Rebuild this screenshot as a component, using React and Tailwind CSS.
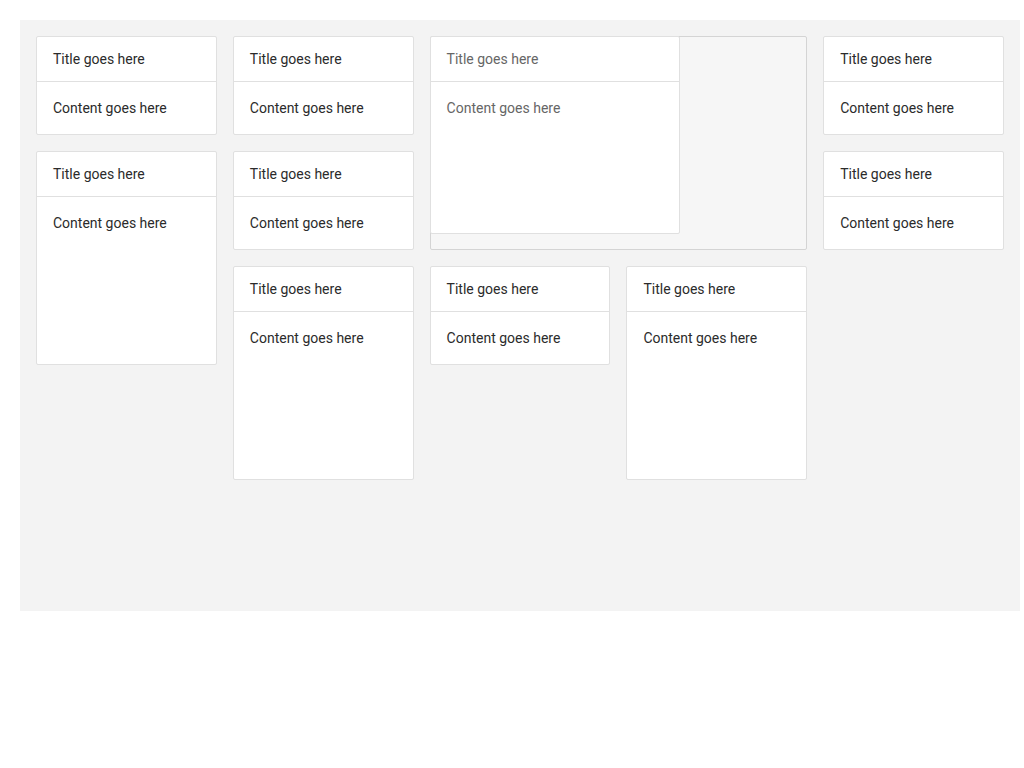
import React from "react"

function Card({ className = "", dim = false }) {
  return (
    <div className={`bg-white border border-[#e0e0e0] rounded-[2px] flex flex-col ${className}`}>
      <div className={`px-4 py-3 border-b border-[#e0e0e0] text-sm leading-5 ${dim ? "text-[#666666]" : "text-[#2b2b2b]"}`}>
        Title goes here
      </div>
      <div className={`px-4 pt-4 text-sm leading-5 ${dim ? "text-[#666666]" : "text-[#2b2b2b]"}`}>
        Content goes here
      </div>
    </div>
  )
}

export default function App() {
  return (
    <div className="bg-white min-h-[768px] pt-5 pl-5" style={{ fontFamily: "Roboto, 'Liberation Sans', sans-serif" }}>
      <div className="w-[1000px] bg-[#f3f3f3] p-4 grid grid-cols-5 grid-rows-[repeat(5,99px)] gap-4">
        <Card className="col-start-1 row-start-1" />
        <Card className="col-start-2 row-start-1" />
        <div className="col-start-3 col-span-2 row-start-1 row-span-2 relative bg-[#f6f6f6] border border-[#d4d4d4] rounded-[2px]">
          <Card dim className="absolute left-[-1px] top-[-1px] w-[250px] h-[198px]" />
        </div>
        <Card className="col-start-5 row-start-1" />
        <Card className="col-start-1 row-start-2 row-span-2" />
        <Card className="col-start-2 row-start-2" />
        <Card className="col-start-5 row-start-2" />
        <Card className="col-start-2 row-start-3 row-span-2" />
        <Card className="col-start-3 row-start-3" />
        <Card className="col-start-4 row-start-3 row-span-2" />
      </div>
    </div>
  )
}
